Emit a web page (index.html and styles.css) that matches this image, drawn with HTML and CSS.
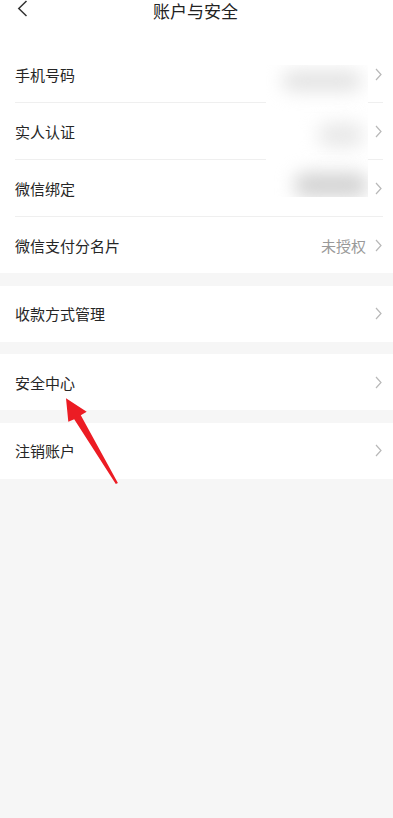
FILE: index.html
```html
<!DOCTYPE html>
<html lang="zh-CN">
<head>
<meta charset="utf-8">
<meta name="viewport" content="width=393">
<title>账户与安全</title>
<link rel="stylesheet" href="styles.css">
</head>
<body>
<div class="page">
  <header class="nav">
    <div class="nav-back">
      <svg width="11" height="17" viewBox="0 0 11 17"><path d="M9.5 1 L1.8 8.5 L9.5 16" fill="none" stroke="#333" stroke-width="1.5" stroke-linejoin="miter"/></svg>
    </div>
    <div class="nav-title">账户与安全</div>
    <div></div>
  </header>

  <section class="group group-first">
    <div class="row"><span class="label">手机号码</span><span class="chev chev-auto"><svg width="7" height="13" viewBox="0 0 7 13"><path d="M1 1 L6 6.5 L1 12" fill="none" stroke="#b8b8b8" stroke-width="1.2"/></svg></span></div>
    <div class="divider"></div>
    <div class="row"><span class="label">实人认证</span><span class="chev chev-auto"><svg width="7" height="13" viewBox="0 0 7 13"><path d="M1 1 L6 6.5 L1 12" fill="none" stroke="#b8b8b8" stroke-width="1.2"/></svg></span></div>
    <div class="divider"></div>
    <div class="row"><span class="label">微信绑定</span><span class="chev chev-auto"><svg width="7" height="13" viewBox="0 0 7 13"><path d="M1 1 L6 6.5 L1 12" fill="none" stroke="#b8b8b8" stroke-width="1.2"/></svg></span></div>
    <div class="divider"></div>
    <div class="row"><span class="label">微信支付分名片</span><span class="value">未授权</span><span class="chev"><svg width="7" height="13" viewBox="0 0 7 13"><path d="M1 1 L6 6.5 L1 12" fill="none" stroke="#b8b8b8" stroke-width="1.2"/></svg></span></div>

    <div class="redact">
      <span class="blob blob-1"></span>
      <span class="blob blob-2"></span>
      <span class="blob blob-3"></span>
    </div>
  </section>

  <section class="group">
    <div class="row"><span class="label">收款方式管理</span><span class="chev chev-auto"><svg width="7" height="13" viewBox="0 0 7 13"><path d="M1 1 L6 6.5 L1 12" fill="none" stroke="#b8b8b8" stroke-width="1.2"/></svg></span></div>
  </section>

  <section class="group">
    <div class="row"><span class="label">安全中心</span><span class="chev chev-auto"><svg width="7" height="13" viewBox="0 0 7 13"><path d="M1 1 L6 6.5 L1 12" fill="none" stroke="#b8b8b8" stroke-width="1.2"/></svg></span></div>
  </section>

  <section class="group">
    <div class="row"><span class="label">注销账户</span><span class="chev chev-auto"><svg width="7" height="13" viewBox="0 0 7 13"><path d="M1 1 L6 6.5 L1 12" fill="none" stroke="#b8b8b8" stroke-width="1.2"/></svg></span></div>
  </section>

  <svg class="pointer-arrow" width="64" height="96" viewBox="0 0 64 96">
    <polygon points="6,4.3 26.7,17.7 20.8,21.3 57.9,88.9 55.8,90 14.2,25.2 8.3,27.7" fill="#ec1c24"/>
  </svg>
</div>
</body>
</html>
```

FILE: styles.css
```css
* {
  box-sizing: border-box;
}

html, body {
  margin: 0;
  padding: 0;
}

body {
  background: #f6f6f6;
  font-family: "Noto Sans CJK SC", "Noto Sans", "Liberation Sans", sans-serif;
  color: #222;
}

.page {
  position: relative;
  width: 393px;
  min-height: 818px;
}

.nav {
  height: 46px;
  background: #fff;
  display: grid;
  grid-template-columns: 60px 1fr 60px;
  align-items: start;
}

.nav-back {
  padding-left: 17px;
  height: 20px;
  display: flex;
  align-items: flex-start;
}

.nav-back svg {
  display: block;
}

.nav-title {
  text-align: center;
  font-size: 17px;
  line-height: 20px;
  padding-top: 1px;
  color: #222;
  margin-left: -2px;
}

.group {
  position: relative;
  background: #fff;
  margin-top: 12.5px;
}

.group-first {
  margin-top: 0;
}

.row {
  height: 56px;
  display: flex;
  align-items: center;
  padding: 0 11px 0 15px;
}

.label {
  font-size: 15px;
  color: #262626;
}

.value {
  margin-left: auto;
  font-size: 15px;
  color: #999;
}

.chev {
  display: flex;
  margin-left: 9px;
}

.chev-auto {
  margin-left: auto;
}

.chev svg {
  display: block;
}

.divider {
  height: 1px;
  background: #efefef;
  margin: 0 10px 0 15px;
}

.redact {
  position: absolute;
  left: 266px;
  top: 19px;
  width: 102px;
  height: 132px;
  background: #fff;
  overflow: hidden;
}

.blob {
  position: absolute;
  display: block;
  border-radius: 14px;
  filter: blur(9px);
}

.blob-1 {
  left: 16px;
  top: 6px;
  width: 80px;
  height: 20px;
  background: #e2e2e2;
}

.blob-2 {
  left: 52px;
  top: 58px;
  width: 46px;
  height: 24px;
  background: #e8e8e8;
}

.blob-3 {
  left: 28px;
  top: 108px;
  width: 74px;
  height: 24px;
  background: #d2d2d2;
}

.pointer-arrow {
  position: absolute;
  left: 60px;
  top: 394px;
  pointer-events: none;
}
```
